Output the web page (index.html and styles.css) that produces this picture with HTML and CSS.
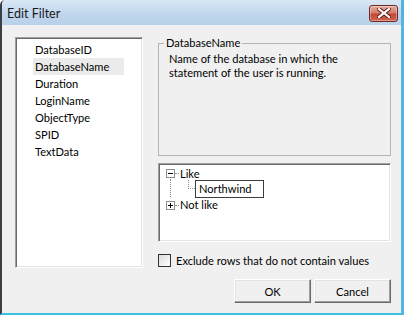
FILE: index.html
```html
<!DOCTYPE html>
<html lang="en">
<head>
  <meta charset="UTF-8" />
  <title>Edit Filter</title>
  <link rel="stylesheet" href="styles.css">
</head>
<body>
  <div class="window">
    <div class="titlebar">
      <span class="title">Edit Filter</span>
      <button class="close-btn" title="Close">
        <svg width="14" height="10" viewBox="0 0 14 10">
          <path d="M2 1 L12 9 M12 1 L2 9" stroke="#5a1a12" stroke-width="4" stroke-linecap="square"/>
          <path d="M2 1 L12 9 M12 1 L2 9" stroke="#ffffff" stroke-width="2.2" stroke-linecap="square"/>
        </svg>
      </button>
    </div>

    <div class="client">
      <div class="column-list sunken">
        <div class="list-item">DatabaseID</div>
        <div class="list-item hover">DatabaseName</div>
        <div class="list-item">Duration</div>
        <div class="list-item">LoginName</div>
        <div class="list-item">ObjectType</div>
        <div class="list-item">SPID</div>
        <div class="list-item">TextData</div>
      </div>

      <div class="right">
        <fieldset class="group">
          <legend>DatabaseName</legend>
          <p class="desc">Name of the database in which the statement of the user is running.</p>
        </fieldset>

        <div class="tree sunken">
          <div class="node">
            <div class="node-row">
              <svg class="expander" width="9" height="9" viewBox="0 0 9 9">
                <rect x="0.5" y="0.5" width="8" height="8" fill="#fff" stroke="#8e8f8f"/>
                <path d="M2 4.5 H7" stroke="#000"/>
              </svg>
              <span class="hline"></span>
              <span class="label">Like</span>
            </div>
            <div class="children">
              <div class="child-row">
                <span class="elbow"></span>
                <span class="edit-box">Northwind</span>
              </div>
            </div>
          </div>
          <div class="node">
            <div class="node-row">
              <svg class="expander" width="9" height="9" viewBox="0 0 9 9">
                <rect x="0.5" y="0.5" width="8" height="8" fill="#fff" stroke="#8e8f8f"/>
                <path d="M2 4.5 H7 M4.5 2 V7" stroke="#000"/>
              </svg>
              <span class="hline"></span>
              <span class="label">Not like</span>
            </div>
          </div>
        </div>

        <label class="check-row">
          <span class="checkbox"></span>
          <span>Exclude rows that do not contain values</span>
        </label>

        <div class="buttons">
          <button class="btn">OK</button>
          <button class="btn">Cancel</button>
        </div>
      </div>
    </div>
  </div>
</body>
</html>
```

FILE: styles.css
```css
body {
  margin: 0;
  font-family: Lato, "Liberation Sans", sans-serif;
  font-size: 11.1px;
  color: #000;
}
.window {
  width: 404px;
  height: 315px;
  box-sizing: border-box;
  display: flex;
  flex-direction: column;
  border-left: 2px solid #3a3f46;
  border-right: 3px solid #52b4df;
  border-bottom: 2px solid #3cc0e2;
  border-top-left-radius: 5px;
  background: #f0f0f0;
  overflow: hidden;
}
.titlebar {
  height: 25px;
  flex: none;
  display: flex;
  align-items: center;
  justify-content: space-between;
  padding: 0 3px 0 5px;
  background: linear-gradient(#dae7f4, #bfd5ec 60%, #b9d1ea);
}
.title {
  font-size: 12.5px;
  color: #1a1a1a;
  margin-top: 2px;
}
.close-btn {
  width: 29px;
  height: 17px;
  margin-top: 1px;
  padding: 0;
  border: 1px solid #6e2a22;
  border-radius: 3px;
  background: linear-gradient(#e6ada0, #d67c68 45%, #c4493a 55%, #cf6552);
  box-shadow: inset 0 0 0 1px rgba(255, 255, 255, 0.35);
  display: flex;
  align-items: center;
  justify-content: center;
}
.client {
  flex: 1;
  display: flex;
  padding: 12px 0 0 13px;
}
.sunken {
  box-sizing: border-box;
  background: #fff;
  border: 1px solid;
  border-color: #a0a0a0 #ffffff #ffffff #a0a0a0;
  box-shadow: inset 1px 1px 0 #696969, inset -1px -1px 0 #e3e3e3;
}
.column-list {
  width: 128px;
  height: 231px;
  padding: 3px 0 0 17px;
}
.list-item {
  width: 89px;
  height: 17px;
  line-height: 17px;
  padding-left: 2px;
}
.list-item.hover {
  background: #ebebeb;
}
.right {
  width: 233px;
  margin-left: 15px;
  display: flex;
  flex-direction: column;
}
.group {
  box-sizing: border-box;
  height: 120px;
  margin: -1px 0 0;
  padding: 0 6px 0 5px;
  border: 1px solid #b4b4b4;
  border-radius: 0;
}
.group legend {
  padding: 0 2px;
  line-height: 14px;
}
.desc {
  margin: 2px 0 0 5px;
  line-height: 14px;
}
.tree {
  height: 79px;
  margin-top: 7px;
  padding: 2px 0 0 7px;
}
.node-row {
  display: flex;
  align-items: center;
  height: 15px;
}
.node + .node .node-row {
  height: 16px;
}
.expander {
  flex: none;
}
.hline {
  width: 4px;
  border-top: 1px dotted #8a8a8a;
  margin: 0 1px 0 0;
}
.label {
  line-height: 14px;
}
.children {
  margin-left: 4px;
  border-left: 1px dotted #8a8a8a;
  padding: 0 0 0 17px;
}
.child-row {
  display: flex;
  align-items: flex-start;
  height: 18px;
  margin-top: -2px;
}
.elbow {
  width: 6px;
  height: 8px;
  margin-top: 1px;
  border-left: 1px dotted #8a8a8a;
  border-bottom: 1px dotted #8a8a8a;
}
.edit-box {
  box-sizing: border-box;
  width: 69px;
  height: 18px;
  line-height: 16px;
  padding-left: 3px;
  border: 1px solid #3c3c3c;
  margin-top: 1px;
}
.check-row {
  display: flex;
  align-items: center;
  gap: 5px;
  margin-top: 12px;
}
.checkbox {
  width: 11px;
  height: 11px;
  border: 1px solid #333;
  background: linear-gradient(135deg, #dcdcdc, #fff);
}
.buttons {
  display: flex;
  justify-content: flex-end;
  gap: 3px;
  margin-top: 12px;
}
.btn {
  width: 77px;
  height: 24px;
  padding: 0;
  font-family: inherit;
  font-size: 11.1px;
  color: #000;
  background: #f0f0f0;
  border: 1px solid;
  border-color: #ffffff #696969 #696969 #ffffff;
  box-shadow: inset -1px -1px 0 #a0a0a0, inset 1px 1px 0 #e3e3e3;
}
```
